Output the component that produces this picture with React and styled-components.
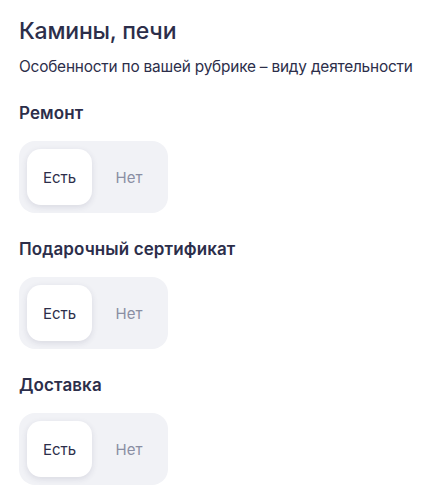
import React, { useState } from "react";
import styled, { createGlobalStyle } from "styled-components";

const GlobalStyle = createGlobalStyle`
  body {
    margin: 0;
    background: #fff;
    font-family: Inter, "Noto Sans", sans-serif;
    color: #2c2e4a;
  }
`;

const Page = styled.div`
  padding: 15px 19px 16px;
`;

const Title = styled.h1`
  margin: 0;
  font-size: 23px;
  line-height: 32px;
  font-weight: 500;
  letter-spacing: -0.2px;
`;

const Subtitle = styled.p`
  margin: 9px 0 0;
  font-size: 15.4px;
  line-height: 21px;
  color: #2c2e4a;
  letter-spacing: -0.2px;
`;

const Section = styled.section`
  margin-top: 25px;
`;

const Label = styled.h2`
  margin: 0;
  font-size: 17px;
  line-height: 22px;
  font-weight: 600;
  letter-spacing: 0.1px;
`;

const Segmented = styled.div`
  margin-top: 17px;
  display: inline-flex;
  padding: 8px 2px 8px 8px;
  background: #f1f2f6;
  border-radius: 16px;
`;

const Option = styled.button`
  width: ${(p) => (p.$active ? "65px" : "74px")};
  height: 56px;
  border: 0;
  border-radius: 14px;
  font-family: inherit;
  font-size: 15px;
  cursor: pointer;
  background: ${(p) => (p.$active ? "#fff" : "transparent")};
  color: ${(p) => (p.$active ? "#2c2e4a" : "#8a8ea3")};
  box-shadow: ${(p) => (p.$active ? "0 2px 6px rgba(40, 45, 80, 0.12)" : "none")};
`;

const features = ["Ремонт", "Подарочный сертификат", "Доставка"];

function Toggle() {
  const [value, setValue] = useState(true);
  return (
    <Segmented>
      <Option $active={value} onClick={() => setValue(true)}>Есть</Option>
      <Option $active={!value} onClick={() => setValue(false)}>Нет</Option>
    </Segmented>
  );
}

export default function App() {
  return (
    <>
      <GlobalStyle />
      <Page>
        <Title>Камины, печи</Title>
        <Subtitle>Особенности по вашей рубрике – виду деятельности</Subtitle>
        {features.map((f) => (
          <Section key={f}>
            <Label>{f}</Label>
            <Toggle />
          </Section>
        ))}
      </Page>
    </>
  );
}
